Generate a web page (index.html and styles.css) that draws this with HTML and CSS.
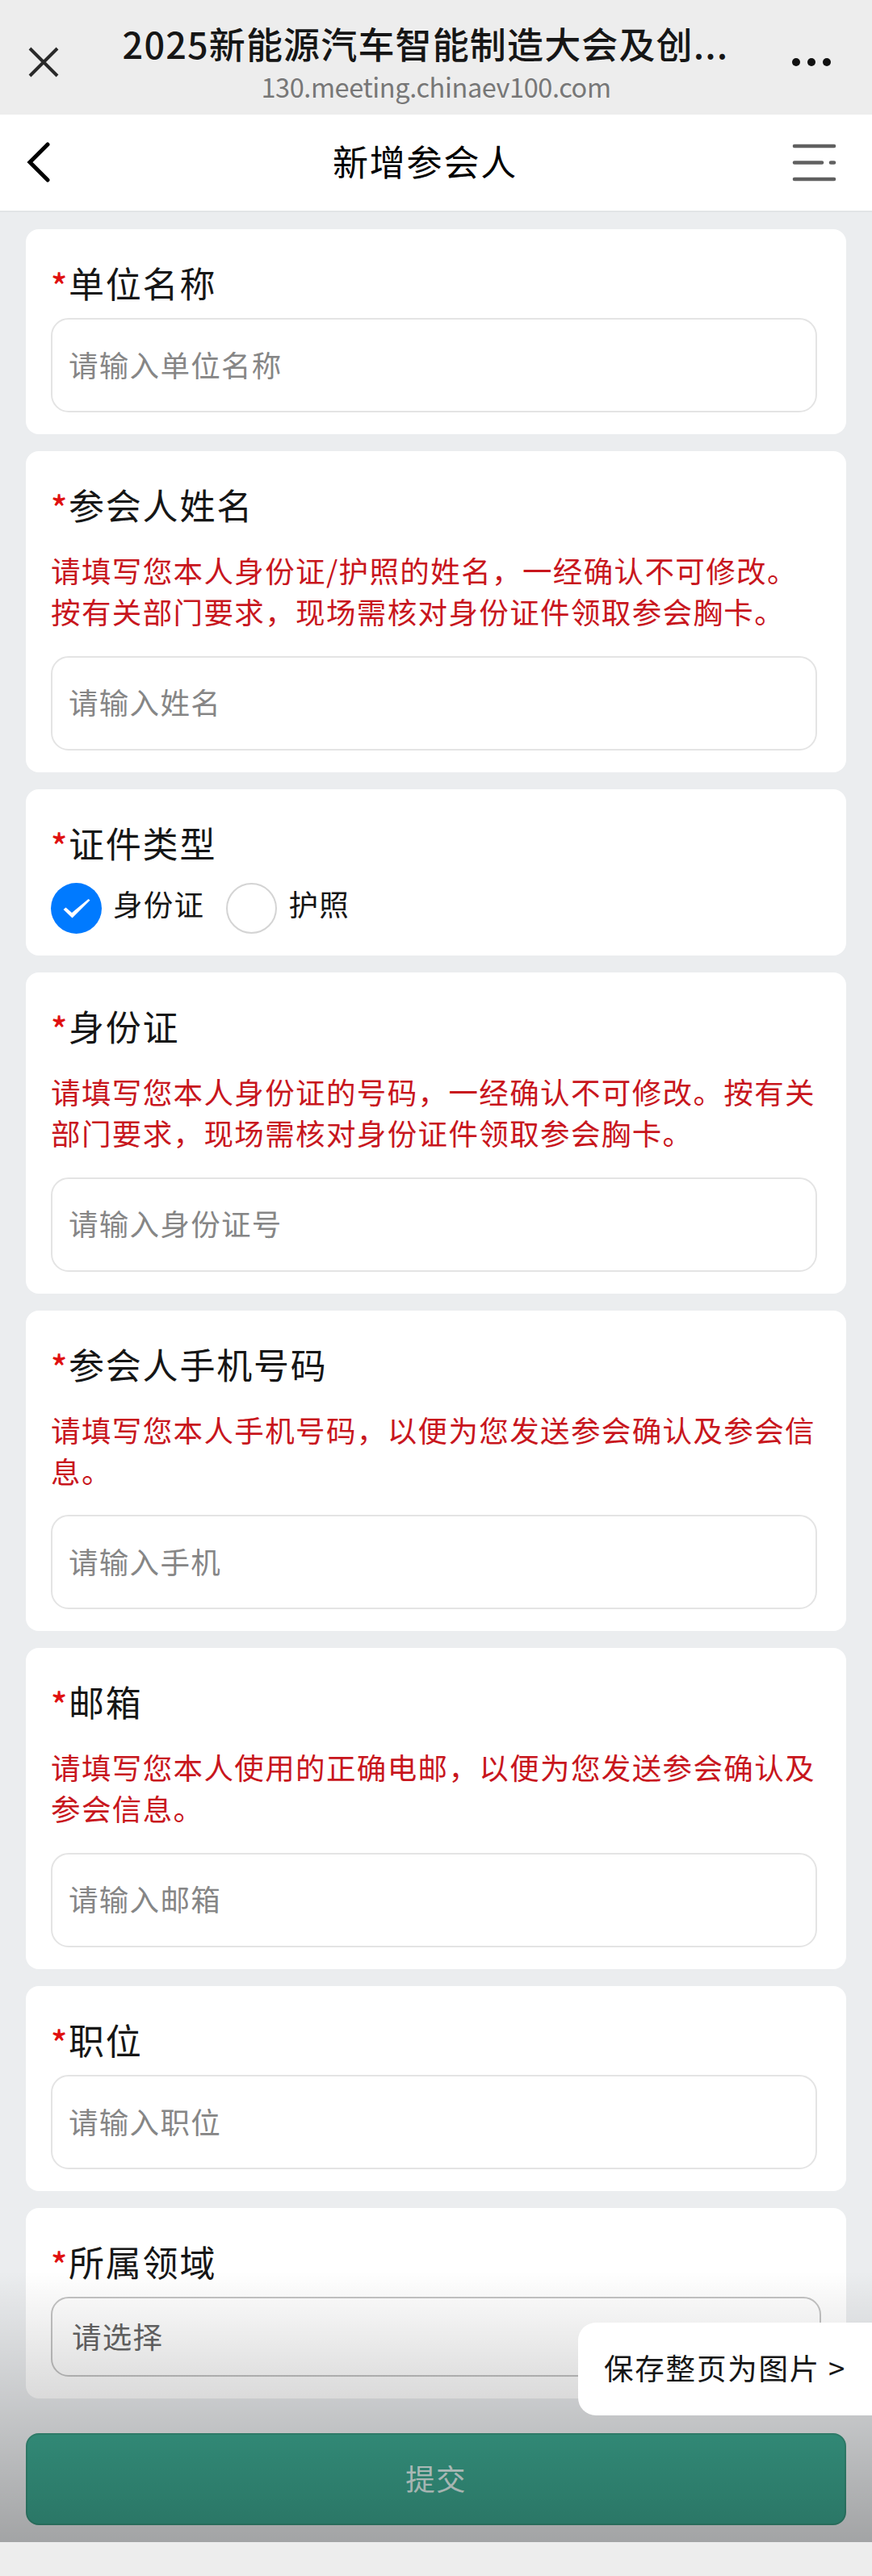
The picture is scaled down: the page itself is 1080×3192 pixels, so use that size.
FILE: index.html
```html
<!DOCTYPE html>
<html lang="zh-CN">
<head>
  <meta charset="UTF-8" />
  <meta name="viewport" content="width=device-width, initial-scale=1.0"/>
  <title>新增参会人</title>
  <link rel="stylesheet" href="styles.css">
</head>
<body>
  <header class="topbar">
    <svg class="close" viewBox="0 0 40 40"><path d="M3 3L37 37M37 3L3 37"/></svg>
    <div class="topbar-text">
      <div class="topbar-title">2025新能源汽车智能制造大会及创...</div>
      <div class="topbar-url">130.meeting.chinaev100.com</div>
    </div>
    <svg class="more" viewBox="0 0 50 12"><circle cx="6" cy="6" r="5"/><circle cx="25" cy="6" r="5"/><circle cx="44" cy="6" r="5"/></svg>
  </header>

  <nav class="navbar">
    <svg class="back" viewBox="0 0 30 50"><path d="M26 3L4 25L26 47"/></svg>
    <h1>新增参会人</h1>
    <svg class="menu" viewBox="0 0 56 48"><path d="M3 4H52M3 24.5H37M48 24.5H52M3 45H52"/></svg>
  </nav>

  <main class="page">
    <form class="form">
      <section class="card">
        <label class="label" for="company"><span class="star">*</span>单位名称</label>
        <input class="input" type="text" id="company" placeholder="请输入单位名称">
      </section>

      <section class="card">
        <label class="label" for="name"><span class="star">*</span>参会人姓名</label>
        <p class="hint">请填写您本人身份证/护照的姓名，一经确认不可修改。<br>按有关部门要求，现场需核对身份证件领取参会胸卡。</p>
        <input class="input" type="text" id="name" placeholder="请输入姓名">
      </section>

      <section class="card">
        <div class="label"><span class="star">*</span>证件类型</div>
        <div class="radios">
          <span class="radio checked"><svg viewBox="0 0 63 63"><path d="M15.5 33L18.5 30.5L26 37L46.5 20L48.5 21.5L26.5 43.5Z"/></svg></span>
          <span class="radio-text">身份证</span>
          <span class="radio"></span>
          <span class="radio-text">护照</span>
        </div>
      </section>

      <section class="card">
        <label class="label" for="idcard"><span class="star">*</span>身份证</label>
        <p class="hint">请填写您本人身份证的号码，一经确认不可修改。按有关<br>部门要求，现场需核对身份证件领取参会胸卡。</p>
        <input class="input" type="text" id="idcard" placeholder="请输入身份证号">
      </section>

      <section class="card">
        <label class="label" for="phone"><span class="star">*</span>参会人手机号码</label>
        <p class="hint">请填写您本人手机号码，以便为您发送参会确认及参会信<br>息。</p>
        <input class="input" type="text" id="phone" placeholder="请输入手机">
      </section>

      <section class="card">
        <label class="label" for="email"><span class="star">*</span>邮箱</label>
        <p class="hint">请填写您本人使用的正确电邮，以便为您发送参会确认及<br>参会信息。</p>
        <input class="input" type="text" id="email" placeholder="请输入邮箱">
      </section>

      <section class="card">
        <label class="label" for="job"><span class="star">*</span>职位</label>
        <input class="input" type="text" id="job" placeholder="请输入职位">
      </section>

      <section class="card">
        <div class="label"><span class="star">*</span>所属领域</div>
        <div class="select">请选择</div>
      </section>

      <button class="submit" type="button">提交</button>
    </form>
    <div class="shade"></div>
    <div class="save-tip">保存整页为图片 &gt;</div>
  </main>
</body>
</html>
```

FILE: styles.css
```css
* {
  box-sizing: border-box;
}

body {
  margin: 0;
  height: 3192px;
  background-color: #ededed;
  color: #161616;
  font-family: "Noto Sans CJK SC", sans-serif;
}

/* browser bar */
.topbar {
  display: flex;
  align-items: flex-start;
  height: 142px;
  padding: 0 50px 0 34px;
  background-color: #ededed;
}

.close {
  width: 40px;
  height: 40px;
  margin-top: 57px;
  fill: none;
  stroke: #2a2a2a;
  stroke-width: 4;
}

.topbar-text {
  flex: 1;
  padding-top: 24px;
  text-align: center;
  white-space: nowrap;
}

.topbar-title {
  height: 60px;
  font-size: 45px;
  line-height: 60px;
  font-weight: 500;
  letter-spacing: 1.15px;
}

.topbar-url {
  height: 46px;
  padding-left: 26px;
  font-size: 32.5px;
  line-height: 46px;
  letter-spacing: -0.4px;
  color: #777;
}

.more {
  width: 50px;
  height: 12px;
  margin-top: 71px;
  fill: #111;
}

/* page nav */
.navbar {
  display: flex;
  align-items: center;
  justify-content: space-between;
  height: 119px;
  padding: 0 43px 2px 33px;
  background-color: #fff;
}

.navbar h1 {
  margin: 0;
  padding: 0 0 4px 9px;
  font-size: 44px;
  line-height: 60px;
  font-weight: 400;
  letter-spacing: 1.8px;
  color: #000;
}

.back {
  width: 30px;
  height: 50px;
  fill: none;
  stroke: #000;
  stroke-width: 5;
  stroke-linecap: round;
}

.menu {
  width: 56px;
  height: 48px;
  fill: none;
  stroke: #606060;
  stroke-width: 4.6;
  stroke-linecap: round;
}

.page {
  position: relative;
  height: 2889px;
  background-color: #ebedef;
  border-top: 2px solid #e2e4e6;
}

.form {
  display: flex;
  flex-direction: column;
  gap: 21.2px;
  padding: 21px 32px 0;
}

.card {
  padding: 34px 31px 27px;
  background-color: #fff;
  border-radius: 16px;
}

.label {
  display: block;
  margin-bottom: 12px;
  font-size: 44px;
  line-height: 64px;
  letter-spacing: 1.8px;
}

.star {
  display: inline-block;
  width: 22px;
  color: #e01010;
  font-size: 42px;
  line-height: 50px;
  font-weight: 500;
  vertical-align: -2px;
}

.hint {
  margin: 24px 0 29.5px;
  font-size: 36.5px;
  line-height: 51px;
  letter-spacing: 1.38px;
  color: #c8161d;
  white-space: nowrap;
}

.input {
  display: block;
  width: 949px;
  height: 117px;
  padding: 0 20px 3px;
  border: 2px solid #e4e4e4;
  border-radius: 22px;
  background: #fff;
  font-family: inherit;
  font-size: 36.5px;
  letter-spacing: 1.3px;
}

.input::placeholder {
  color: #868686;
}

.radios {
  display: flex;
  align-items: center;
  height: 63px;
  margin-top: 18px;
}

.radio {
  width: 63px;
  height: 63px;
  border: 2px solid #d4d4d4;
  border-radius: 50%;
}

.radio.checked {
  border: none;
  background-color: #007aff;
}

.radio svg {
  display: block;
  fill: #fff;
}

.radio-text {
  margin: 0 27px 11px 14px;
  font-size: 36.5px;
  line-height: 50px;
  letter-spacing: 1.3px;
}

.select {
  height: 99px;
  padding: 0 24px;
  border: 2px solid #c4c4c4;
  border-radius: 22px;
  font-size: 36.5px;
  line-height: 93px;
  letter-spacing: 1.3px;
  color: #666;
}

.submit {
  height: 114px;
  margin-top: 21px;
  padding-bottom: 3px;
  border: 2px solid #38967f;
  border-radius: 16px;
  background-color: #3ca790;
  color: #dcefeb;
  font-family: inherit;
  font-size: 36.5px;
  letter-spacing: 1.3px;
}

/* dark fade over the bottom of the page */
.shade {
  position: absolute;
  left: 0;
  right: 0;
  bottom: 0;
  height: 336px;
  background: linear-gradient(rgba(0,0,0,0), rgba(0,0,0,0.31));
}

.save-tip {
  position: absolute;
  right: 0;
  bottom: 157px;
  width: 364px;
  height: 115px;
  padding-left: 32px;
  border-radius: 22px 0 0 22px;
  background-color: #fff;
  font-size: 36.5px;
  line-height: 112px;
  letter-spacing: 1.8px;
  white-space: nowrap;
}
```
